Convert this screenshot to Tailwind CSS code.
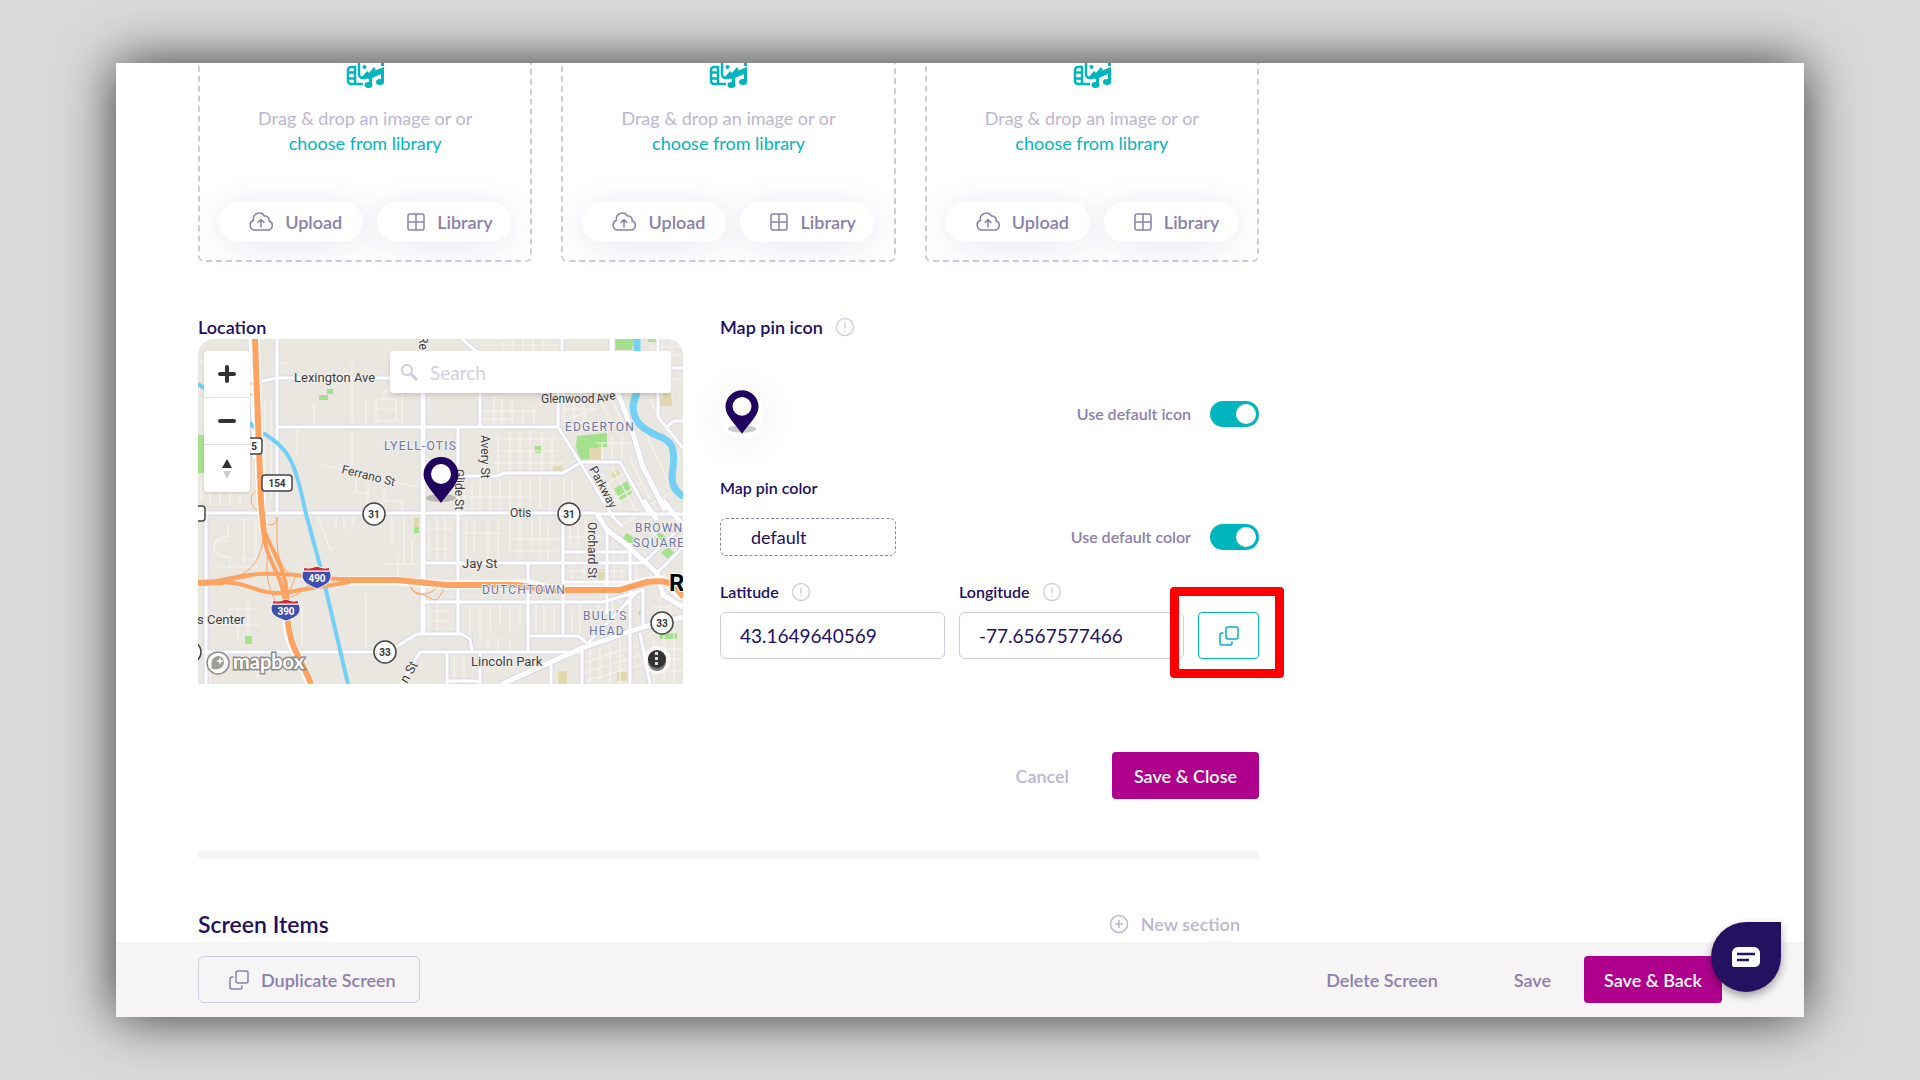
<!DOCTYPE html>
<html lang="en">
<head>
    <meta charset="UTF-8">
    <meta name="viewport" content="width=device-width, initial-scale=1.0">
    <title>Edit Screen</title>
    <script src="https://cdn.jsdelivr.net/npm/@tailwindcss/browser@4"></script>
</head>
<body class="h-screen overflow-hidden bg-[#d9d9d9] px-[116px] py-[63px] font-['Lato',sans-serif] text-lg text-[#20105f]">
    <!-- Shared icons -->
    <svg class="hidden" aria-hidden="true">
        <symbol id="icon-media" viewBox="0 0 38 38">
            <g fill="none" stroke="currentColor" stroke-width="2.500">
                <path d="M17 34H5a3 3 0 0 1-3-3V20a3 3 0 0 1 3-3h4v17M2 22.500h7M2 28.500h7"/>
                <path d="M13 6v18a4 4 0 0 0 4 4h3M12 6h18v5"/>
            </g>
            <g fill="currentColor">
                <circle cx="18.500" cy="17" r="2"/>
                <path d="M15 28l6-7 2 2 5-6 2 3-7 4v5z"/>
                <path d="M23 23l15-6v15h-3v-8l-9 4v8h-3z"/>
                <ellipse cx="22.500" cy="35" rx="4" ry="3"/>
                <ellipse cx="34" cy="32" rx="4" ry="3"/>
                <path d="M35 8h3v8h-3z"/>
            </g>
        </symbol>
        <symbol id="icon-upload" viewBox="0 0 24 24">
            <g fill="none" stroke="currentColor" stroke-width="1.500" stroke-linecap="round" stroke-linejoin="round">
                <path d="M6 20a5 5 0 0 1-1.500-9.700A6 6 0 0 1 15.500 6a4 4 0 0 1 4.500 5 4.600 4.600 0 0 1-1.500 9z"/>
                <path d="M12 17V10M9 12.500l3-3 3 3"/>
            </g>
        </symbol>
        <symbol id="icon-library" viewBox="0 0 18 18">
            <path d="M3 1h12a2 2 0 0 1 2 2v12a2 2 0 0 1-2 2H3a2 2 0 0 1-2-2V3a2 2 0 0 1 2-2zM9 1v16M1 9h16" fill="none" stroke="currentColor" stroke-width="1.500"/>
        </symbol>
        <symbol id="icon-copy" viewBox="0 0 20 20">
            <g fill="none" stroke="currentColor" stroke-width="1.500" stroke-linecap="round">
                <rect x="7" y="1" width="12" height="12" rx="2"/>
                <path d="M4 7H3a2 2 0 0 0-2 2v8a2 2 0 0 0 2 2h8a2 2 0 0 0 2-2v-1"/>
            </g>
        </symbol>
        <symbol id="icon-info" viewBox="0 0 20 20">
            <g fill="none" stroke="currentColor" stroke-width="1.500" stroke-linecap="round">
                <circle cx="10" cy="10" r="8.500"/>
                <path d="M10 6v5M10 14v.1"/>
            </g>
        </symbol>
        <symbol id="icon-plus" viewBox="0 0 20 20">
            <g fill="none" stroke="currentColor" stroke-width="1.500" stroke-linecap="round">
                <circle cx="10" cy="10" r="8.500"/>
                <path d="M10 6.500v7M6.500 10h7"/>
            </g>
        </symbol>
        <symbol id="icon-pin" viewBox="0 0 36 46">
            <ellipse cx="18" cy="41" rx="15" ry="4" fill="#000" opacity=".2"/>
            <path fill="#20005f" fill-rule="evenodd" d="M18 0a17.500 17.500 0 0 1 17.500 17.500c0 9-10 18-17.500 28.500C10.500 35.500.5 26.500.5 17.500A17.500 17.500 0 0 1 18 0z"/>
            <circle cx="18" cy="17" r="10" fill="#fff"/>
        </symbol>
    </svg>

    <!-- App window -->
    <div class="relative flex h-full flex-col bg-white shadow-[0_0_50px_rgba(0,0,0,0.75)]">
        <main class="min-h-0 flex-1 overflow-hidden px-[82px]">
            <div class="max-w-[1061px]">
                <!-- Image drop zones -->
                <section class="-mt-10 grid grid-cols-3 gap-[29px]">
                    <div class="flex flex-col items-center rounded-md border-2 border-dashed border-[#cfcbdf] pt-[25px] pb-[18px]">
                        <svg class="size-[38px] text-[#00b5bd]"><use href="#icon-media"/></svg>
                        <p class="mt-[18px] text-center leading-[25px] text-[#bcb6d0]">Drag &amp; drop an image or or<br><a href="#" class="text-[#00b5bd]">choose from library</a></p>
                        <div class="mt-[46px] flex gap-[14px] text-[#8a80ad]">
                            <button class="flex h-10 w-[144px] items-center gap-3 rounded-full bg-white pl-[30px] font-semibold shadow-[0_4px_36px_rgba(32,16,95,0.10)]"><svg class="size-6"><use href="#icon-upload"/></svg>Upload</button>
                            <button class="flex h-10 w-[134px] items-center gap-3 rounded-full bg-white pl-[30px] font-semibold shadow-[0_4px_36px_rgba(32,16,95,0.10)]"><svg class="size-[18px]"><use href="#icon-library"/></svg>Library</button>
                        </div>
                    </div>
                    <div class="flex flex-col items-center rounded-md border-2 border-dashed border-[#cfcbdf] pt-[25px] pb-[18px]">
                        <svg class="size-[38px] text-[#00b5bd]"><use href="#icon-media"/></svg>
                        <p class="mt-[18px] text-center leading-[25px] text-[#bcb6d0]">Drag &amp; drop an image or or<br><a href="#" class="text-[#00b5bd]">choose from library</a></p>
                        <div class="mt-[46px] flex gap-[14px] text-[#8a80ad]">
                            <button class="flex h-10 w-[144px] items-center gap-3 rounded-full bg-white pl-[30px] font-semibold shadow-[0_4px_36px_rgba(32,16,95,0.10)]"><svg class="size-6"><use href="#icon-upload"/></svg>Upload</button>
                            <button class="flex h-10 w-[134px] items-center gap-3 rounded-full bg-white pl-[30px] font-semibold shadow-[0_4px_36px_rgba(32,16,95,0.10)]"><svg class="size-[18px]"><use href="#icon-library"/></svg>Library</button>
                        </div>
                    </div>
                    <div class="flex flex-col items-center rounded-md border-2 border-dashed border-[#cfcbdf] pt-[25px] pb-[18px]">
                        <svg class="size-[38px] text-[#00b5bd]"><use href="#icon-media"/></svg>
                        <p class="mt-[18px] text-center leading-[25px] text-[#bcb6d0]">Drag &amp; drop an image or or<br><a href="#" class="text-[#00b5bd]">choose from library</a></p>
                        <div class="mt-[46px] flex gap-[14px] text-[#8a80ad]">
                            <button class="flex h-10 w-[144px] items-center gap-3 rounded-full bg-white pl-[30px] font-semibold shadow-[0_4px_36px_rgba(32,16,95,0.10)]"><svg class="size-6"><use href="#icon-upload"/></svg>Upload</button>
                            <button class="flex h-10 w-[134px] items-center gap-3 rounded-full bg-white pl-[30px] font-semibold shadow-[0_4px_36px_rgba(32,16,95,0.10)]"><svg class="size-[18px]"><use href="#icon-library"/></svg>Library</button>
                        </div>
                    </div>
                </section>

                <section class="mt-[53px] grid grid-cols-[485fr_539fr] gap-[37px]">
                    <!-- Location map -->
                    <div>
                        <h3 class="leading-6 font-semibold">Location</h3>
                        <div class="relative overflow-hidden rounded-t-2xl">
                            <svg class="block w-full font-['Roboto',sans-serif]" viewBox="0 0 485 345" role="img" aria-label="Map">
                                <rect width="485" height="345" fill="#eae6e0"/>
                                <!-- parks and lots -->
                                <g fill="#a5e18d">
                                    <path d="M0 96h6v38H0zM121 56h9v5h-9zM129 50h6v5h-6zM417 0h19l-2 11h-17zM379 97l30-3v14h-8l-7 12-12 2-4-14zM337 107h7v7h-7zM47 297h7v8h-7zM216 188h5v6h-5zM441 272h5v4h-5zM461 295l18-1v6h-17zM434 54l5 4-4 10-3-6zM450 0h8v3h-8z"/>
                                    <path d="M416 150l13-8 5 12-11 7zM424 200l5-6 9 6-5 7zM456 197l5-4 7 5-4 5zM463 214l7-6 7 6-7 6z"/>
                                </g>
                                <g fill="#e2d8b0">
                                    <path d="M391 109h12v12h-12zM354 127h11v5h-11zM462 54h12v13h-12zM413 136l6-5 4 5-6 5zM216 179h5v9h-5zM360 332h9v13h-9zM419 333h10v9h-10zM399 230h8v11h-8z"/>
                                </g>
                                <!-- minor streets -->
                                <g fill="none" stroke="#f6f4f0" stroke-width="1.200">
                                    <path d="M0 20l6 4M0 60h6M0 66h6M0 72h6M0 80h6M67 60v110M73 60v100M69 120h10M82 24h7M82 32h7M116 64v22M154 24v60M168 60v26M178 60h20v22h-20zM178 70h20M186 60v-8h14v-10M204 42v46M232 71c0-6-6-4 0-13"/>
                                    <path d="M124 126l96 22M158 140v14h14M170 145v26M186 150v12h18v12M99 90v26M154 92v36M3 142v20M12 142v25M22 148v19M32 138v29M42 142v25M50 120v30M0 152h50"/>
                                    <path d="M16 202h14M16 214c0-14 4-16 14-16v-12M16 206c0 10 6 12 16 12v10M40 180h18v40H44M46 180v44M16 228h44M30 270h28M40 270v34M50 262v34M22 286h40M12 320v25M60 320v20"/>
                                    <path d="M120 178l12 32 6-2M138 178v14M146 178v12M155 178v8M104 262v44M168 254v56M188 225h36M200 216v26M206 178v46M214 200v24M194 178v30"/>
                                    <path d="M231 182v38M239 176v46M247 176v46M226 190h28M226 210h28M231 266v28M239 260v34M226 272h26M226 282h26M305 3v9M315 0v12M325 0v12M335 0v12M282 6h80M345 0v12M296 57v30M304 60v27M314 57v30M325 72v15M336 68v19M282 72h60M282 80h30"/>
                                    <path d="M300 96v40M312 92v44M322 92v43M332 92v42M344 92v40M354 96v36M296 100h70M300 112h60M296 124h70M266 150v24M274 144v30M282 140v34M292 140v34M302 140v34M312 140v34M322 138v34M332 138v36M342 138v32M352 138v36M366 140v34M374 140v30M266 158h70"/>
                                    <path d="M268 182v36M276 182v34M290 182v40M300 182v40M312 178v34M322 178v40M334 178v34M342 178v42M350 182v40M268 194h36M312 200h50M316 212h50M372 182v26M380 178v44M388 178v30M396 182v40M366 198h40M366 232h60M374 224v24M386 224v24M416 208v36M424 214v30M438 224v20"/>
                                    <path d="M272 266v30M282 266v34M292 266v26M302 266v20M312 266v28M322 266v20M338 266v30M346 266v30M356 266v30M374 270v24M382 266v30M400 262v18M414 260v18M422 262v18M290 300v14M300 298v14M312 300v14M256 316v28M266 316v26M296 316v18M310 316v14"/>
                                    <path d="M392 310v35M402 308v37M412 304v41M422 300v45M386 324l52-18M386 334l56-18M388 342l60-18M450 296l30-12M456 300v45M466 294v51M476 290v55M452 310h33M456 320h29M456 332h29M462 256v20M472 262v18M454 268h24"/>
                                    <path d="M366 44v36M376 60v28M386 56v34M396 70l-30 12M398 56l24 38M408 50l20 40M366 70h34M372 90h40M404 124v-20M414 124V98M424 128V96M398 104h34M452 8h30M446 16h39M464 0v60M474 0v60M464 40h21M452 60l30 60M446 90l28 60M432 120l20 40M404 134l20 36M414 128l24 44M400 150l30-18M410 164l34-20M452 166l20-12M424 186l30-18M430 194l40-24M448 204l34-30M444 180l20 24"/>
                                </g>
                                <!-- arterial streets: casing then fill -->
                                <g fill="none" stroke="#d8d8ea" stroke-linejoin="round">
                                    <g stroke-width="5">
                                        <path d="M79 0v176M52 0l4 120M64 42l15-3h146M79 88h281M282 54v34M364 0v12M360 40v48l22 35 33 55 10 10M260 88v206M262 137h37l8-3h58l19-11h38l10 18 20 36M264 0l15 13"/>
                                        <path d="M8 176v169M7 174h392M399 175h86M0 313h190l29-18h6M225 224h220M225 263h180l40-12M225 295h39l8 5 2 13M203 345l19-32h160M330 224v89M365 176v119M409 191v84M432 204v141M445 249v40M249 313v32M282 313v32M353 324v21M384 308v37M365 213h67M365 243h75M365 252h60M330 297h50l9 7M249 342h33M390 304l50-52M442 294l10 51M445 224l40-38M459 234l26-26M475 82h10M473 29h12M469 88l6-6M460 0v78l25 31M65 138l15 4"/>
                                    </g>
                                    <path stroke-width="7" d="M225 54v242M399 175l10 16 16 12 34 31 6 22 20 12M445 161l14 20M465 161l20 26M304 345l80-36 61-21 40-10M414 0v38l21 56 10 34 22 43"/>
                                </g>
                                <g fill="none" stroke="#fff" stroke-linejoin="round">
                                    <g stroke-width="3">
                                        <path d="M79 0v176M52 0l4 120M64 42l15-3h146M79 88h281M282 54v34M364 0v12M360 40v48l22 35 33 55 10 10M260 88v206M262 137h37l8-3h58l19-11h38l10 18 20 36M264 0l15 13"/>
                                        <path d="M8 176v169M7 174h392M399 175h86M0 313h190l29-18h6M225 224h220M225 263h180l40-12M225 295h39l8 5 2 13M203 345l19-32h160M330 224v89M365 176v119M409 191v84M432 204v141M445 249v40M249 313v32M282 313v32M353 324v21M384 308v37M365 213h67M365 243h75M365 252h60M330 297h50l9 7M249 342h33M390 304l50-52M442 294l10 51M445 224l40-38M459 234l26-26M475 82h10M473 29h12M469 88l6-6M460 0v78l25 31M65 138l15 4"/>
                                    </g>
                                    <path stroke-width="5" d="M225 54v242M399 175l10 16 16 12 34 31 6 22 20 12M445 161l14 20M465 161l20 26M304 345l80-36 61-21 40-10M414 0v38l21 56 10 34 22 43"/>
                                </g>
                                <!-- water -->
                                <path d="M439 0v12l-2 30 2 12-4 12c0 18 10 25 30 33 14 6 11 22 9 39 0 10 4 14 12 20" fill="none" stroke="#73cff3" stroke-width="7"/>
                                <path d="M0 45l6 4M52 84l5 5M65 94c24 14 32 26 42 77l17 63 26 111" fill="none" stroke="#73cff3" stroke-width="4"/>
                                <!-- highways -->
                                <g fill="none" stroke="#fda361" stroke-width="1">
                                    <path d="M57 40l6-2M52 45c8-2 8 8 10 14M52 55c8 4 10 10 12 20M62 150c-14 4-10 20 2 24M79 178c0 12-12 8-14 2M79 178v20c0 20 4 30 14 38M66 194c-2 20-8 38-30 44M70 214c-4 30 4 40 14 64M90 244c-20-20-40 0-70-2M80 254c10-2 16 18 10 24M98 236c-8 20-8 20-8 36M208 243c10 6 4 14 18 12s10-10 24-8M210 245c6 12 14 8 22 14s10-4 14-8M93 258c14-4 14-14 30-18"/>
                                </g>
                                <g fill="none" stroke="#fff" stroke-width="9" opacity=".8">
                                    <path d="M57 0l2 54 4 110 3 30M89 278c0 30 14 40 23 67M142 242h57l50 4 83-1 20 5h70l27-8 16-1 20 17"/>
                                </g>
                                <g fill="none" stroke="#fda361" stroke-width="6">
                                    <path d="M57 0l2 54 4 110 3 30M89 268c0 40 14 50 24 77M0 244l25-1M142 241h57l50 5h70l33 5h70l27-8c16-2 26-2 36 15"/>
                                    <g stroke-width="4">
                                        <path d="M65 184c0 40 20 44 23 88M66 190c8 26 24 36 24 82M14 243c40-8 50-12 111-4l30 2M20 243c40 0 40 18 82 8l50-8"/>
                                    </g>
                                </g>
                                <!-- labels -->
                                <g font-size="13" fill="#3d3d40" stroke="#f3f0ec" stroke-width="2" paint-order="stroke" stroke-linejoin="round">
                                    <text x="96" y="43">Lexington Ave</text>
                                    <text x="343" y="64" font-size="12">Glenwood</text>
                                    <text x="399" y="64" font-size="12" transform="rotate(-12 399 64)">Ave</text>
                                    <text x="143" y="134" font-size="12" transform="rotate(14 143 134)">Ferrano St</text>
                                    <text x="283" y="96" font-size="12" transform="rotate(90 283 96)">Avery St</text>
                                    <text x="257" y="130" font-size="12" transform="rotate(90 257 130)">Glide St</text>
                                    <text x="391" y="130" font-size="12" transform="rotate(62 391 130)">Parkway</text>
                                    <text x="390" y="183" font-size="12" transform="rotate(90 390 183)">Orchard St</text>
                                    <text x="221" y="-3" font-size="12" transform="rotate(90 221 -3)">Re</text>
                                    <text x="312" y="178" font-size="12">Otis</text>
                                    <text x="264" y="229">Jay St</text>
                                    <text x="273" y="327">Lincoln Park</text>
                                    <text x="-1" y="285">s Center</text>
                                    <text x="209" y="345" transform="rotate(-60 209 345)">n St</text>
                                </g>
                                <g class="tracking-widest" font-size="12" fill="#6b75a5" stroke="#f3f0ec" stroke-width="2" paint-order="stroke">
                                    <text x="186" y="111">LYELL-OTIS</text>
                                    <text x="367" y="92">EDGERTON</text>
                                    <text x="284" y="255">DUTCHTOWN</text>
                                    <text x="437" y="193">BROWN</text>
                                    <text x="435" y="208">SQUARE</text>
                                    <text x="385" y="281">BULL'S</text>
                                    <text x="391" y="296">HEAD</text>
                                </g>
                                <text x="471" y="252" font-size="24" font-weight="700" fill="#000" stroke="#fff" stroke-width="2" paint-order="stroke">R</text>
                                <!-- route shields -->
                                <g font-size="10" font-weight="700" fill="#333" text-anchor="middle">
                                    <g fill="#fff" stroke="#444" stroke-width="1.500">
                                        <rect x="64" y="136" width="30" height="16" rx="3"/>
                                        <rect x="40" y="99" width="24" height="16" rx="3"/>
                                        <rect x="-16" y="167" width="23" height="15" rx="3"/>
                                        <circle cx="176" cy="175" r="11"/>
                                        <circle cx="371" cy="175" r="11"/>
                                        <circle cx="187" cy="313" r="11"/>
                                        <circle cx="464" cy="284" r="11"/>
                                        <circle cx="-8" cy="313" r="11"/>
                                    </g>
                                    <text x="79" y="148">154</text>
                                    <text x="56" y="111">5</text>
                                    <text x="176" y="179">31</text>
                                    <text x="371" y="179">31</text>
                                    <text x="187" y="317">33</text>
                                    <text x="464" y="288">33</text>
                                    <g stroke="#fff" stroke-width="1">
                                        <path fill="#3f4fae" d="M105 232h27c4 10-4 14-13 18-9-4-18-8-14-18z"/>
                                        <path fill="#d02f30" d="M105 232l1-4c3 2 7 1 13-1 5 2 9 3 12 1l1 4z"/>
                                        <path fill="#3f4fae" d="M74 265h27c4 10-4 14-13 17-9-3-18-7-14-17z"/>
                                        <path fill="#d02f30" d="M74 265l1-4c3 2 7 1 13-1 5 2 9 3 12 1l1 4z"/>
                                    </g>
                                    <g fill="#fff">
                                        <text x="119" y="243">490</text>
                                        <text x="88" y="276">390</text>
                                    </g>
                                </g>
                                <!-- attribution -->
                                <g stroke="#8f8c88">
                                    <circle cx="20" cy="324" r="11" fill="#fff" stroke-width="1.500"/>
                                    <path d="M14 330c-2-8 1-13 7-13a6 6 0 0 1 5 6c0 6-5 8-12 7z" fill="#a09d99" stroke="none"/>
                                    <path d="M22 318l1 3 3 1-3 1-1 3-1-3-3-1 3-1z" fill="#fff" stroke="none"/>
                                    <text x="35" y="330" font-size="20" font-weight="700" fill="#fff" stroke-width="3" paint-order="stroke" class="font-['Lato',sans-serif]">mapbox</text>
                                </g>
                                <circle cx="459" cy="321" r="14" fill="#fff" opacity=".6"/>
                                <circle cx="459" cy="323" r="9" fill="#777"/>
                                <circle cx="459" cy="320" r="9" fill="#333"/>
                                <path d="M457 313h3v3h-3zM457 318h3v3h-3zM457 323h3v3h-3z" fill="#ddd"/>
                                <use href="#icon-pin" x="225" y="118" width="36" height="46"/>
                            </svg>
                            <!-- map controls -->
                            <div class="absolute top-[12px] left-[6px] w-[46px] divide-y divide-[#dddde4] rounded bg-white shadow-sm">
                                <button class="flex h-[47px] w-full items-center justify-center" aria-label="Zoom in"><svg class="size-5" viewBox="0 0 20 20"><path d="M10 3v14M3 10h14" stroke="#333" stroke-width="4" stroke-linecap="round"/></svg></button>
                                <button class="flex h-[47px] w-full items-center justify-center" aria-label="Zoom out"><svg class="size-5" viewBox="0 0 20 20"><path d="M3 10h14" stroke="#333" stroke-width="4" stroke-linecap="round"/></svg></button>
                                <button class="flex h-[47px] w-full items-center justify-center" aria-label="Reset bearing"><svg class="size-5" viewBox="0 0 20 20"><path d="M10 0l5 9H5z" fill="#333"/><path d="M10 20l4-8H6z" fill="#ccc"/></svg></button>
                            </div>
                            <label class="absolute top-[12px] right-3 left-[192px] flex h-[42px] items-center gap-3 rounded bg-white pl-[11px] shadow-md">
                                <svg class="size-[17px] shrink-0 text-[#cfcbdf]" viewBox="0 0 17 17"><circle cx="6" cy="6" r="5" fill="none" stroke="currentColor" stroke-width="2"/><path d="M10 10l6 6" stroke="currentColor" stroke-width="3"/></svg>
                                <input type="text" placeholder="Search" aria-label="Search" class="h-8 min-w-0 flex-1 text-[19px] outline-none placeholder:text-[#d3cfe0]">
                            </label>
                        </div>
                    </div>

                    <!-- Pin settings -->
                    <div>
                        <div class="flex items-center gap-3 leading-6">
                            <h3 class="leading-6 font-semibold">Map pin icon</h3>
                            <svg class="size-5 text-[#d3cfe0]"><use href="#icon-info"/></svg>
                        </div>
                        <div class="mt-[51px] flex h-12 items-center justify-between">
                            <div class="flex h-12 w-11 justify-center rounded-full bg-white shadow-[0_4px_40px_rgba(32,16,95,0.08)]">
                                <svg class="h-11 w-[34px]"><use href="#icon-pin"/></svg>
                            </div>
                            <label class="flex items-center gap-[19px] text-base font-semibold text-[#8a80ad]">Use default icon
                                <input type="checkbox" checked class="flex h-[26px] w-[49px] appearance-none items-center rounded-full bg-[#cfcbdf] p-[3px] before:size-5 before:rounded-full before:bg-white checked:justify-end checked:bg-[#00b5bd]">
                            </label>
                        </div>
                        <label for="pin-color" class="mt-[38px] block text-base leading-6 font-semibold">Map pin color</label>
                        <div class="mt-[18px] flex items-center justify-between">
                            <input id="pin-color" type="text" value="default" class="h-[38px] w-[176px] rounded-md border border-dashed border-[#8a80ad] pl-[30px] outline-none">
                            <label class="flex items-center gap-[19px] text-base font-semibold text-[#8a80ad]">Use default color
                                <input type="checkbox" checked class="flex h-[26px] w-[49px] appearance-none items-center rounded-full bg-[#cfcbdf] p-[3px] before:size-5 before:rounded-full before:bg-white checked:justify-end checked:bg-[#00b5bd]">
                            </label>
                        </div>
                        <div class="mt-6 flex items-end gap-[14px]">
                            <div class="flex-1">
                                <div class="flex items-center gap-3">
                                    <label for="latitude" class="text-base leading-6 font-semibold">Latitude</label>
                                    <svg class="size-5 text-[#d3cfe0]"><use href="#icon-info"/></svg>
                                </div>
                                <input id="latitude" type="text" value="43.1649640569" class="mt-2 block h-[47px] w-full rounded-md border border-[#cfcbdf] pl-[19px] text-[19px] outline-none">
                            </div>
                            <div class="flex-1">
                                <div class="flex items-center gap-3">
                                    <label for="longitude" class="text-base leading-6 font-semibold">Longitude</label>
                                    <svg class="size-5 text-[#d3cfe0]"><use href="#icon-info"/></svg>
                                </div>
                                <input id="longitude" type="text" value="-77.6567577466" class="mt-2 block h-[47px] w-full rounded-md border border-[#cfcbdf] pl-[19px] text-[19px] outline-none">
                            </div>
                            <div class="relative">
                                <button class="flex h-[47px] w-[61px] items-center justify-center rounded border border-[#00b5bd] text-[#00b5bd]" aria-label="Copy coordinates"><svg class="size-5"><use href="#icon-copy"/></svg></button>
                                <!-- highlight around the copy button -->
                                <div class="pointer-events-none absolute -top-[25px] -right-[25px] -bottom-[19px] -left-7 rounded border-[9px] border-[#ff0000]"></div>
                            </div>
                        </div>
                    </div>
                </section>

                <div class="mt-[68px] flex items-center justify-end gap-[43px] font-semibold">
                    <button class="text-[#bcb6d0]">Cancel</button>
                    <button class="h-[47px] w-[147px] rounded bg-[#ae008c] text-white">Save &amp; Close</button>
                </div>

                <hr class="mt-[52px] h-2 rounded-full border-0 bg-[#f5f5f7]">

                <div class="mt-[49px] flex items-center justify-between pr-[19px]">
                    <h2 class="text-[23px] leading-8 font-semibold">Screen Items</h2>
                    <button class="flex items-center gap-3 font-semibold text-[#bcb6d0]"><svg class="size-5"><use href="#icon-plus"/></svg>New section</button>
                </div>
            </div>
        </main>

        <!-- Action bar -->
        <footer class="flex h-[75px] items-center bg-[#f6f4f5] px-[82px] font-semibold text-[#8a80ad]">
            <button class="flex h-[47px] w-[222px] items-center gap-3 rounded-md border border-[#cfcbdf] pl-[30px]"><svg class="size-5"><use href="#icon-copy"/></svg>Duplicate Screen</button>
            <button class="ml-auto">Delete Screen</button>
            <button class="ml-[76px]">Save</button>
            <button class="ml-[33px] h-[47px] w-[138px] rounded bg-[#ae008c] text-white">Save &amp; Back</button>
        </footer>

        <!-- Chat launcher -->
        <button class="absolute right-[23px] bottom-[25px] flex size-[70px] items-center justify-center rounded-full rounded-tr-md bg-[#24115f] shadow-[0_4px_8px_rgba(0,0,0,0.35)]" aria-label="Open chat">
            <svg class="h-[22px] w-[28px]" viewBox="0 0 28 22"><path d="M6 1h16a6 6 0 0 1 6 6v9a5 5 0 0 1-5 5H2a2 2 0 0 1-2-2V7a6 6 0 0 1 6-6z" fill="#fff"/><path d="M5 8h18M5 14h12" stroke="#24115f" stroke-width="2.500"/></svg>
        </button>
    </div>
</body>
</html>
